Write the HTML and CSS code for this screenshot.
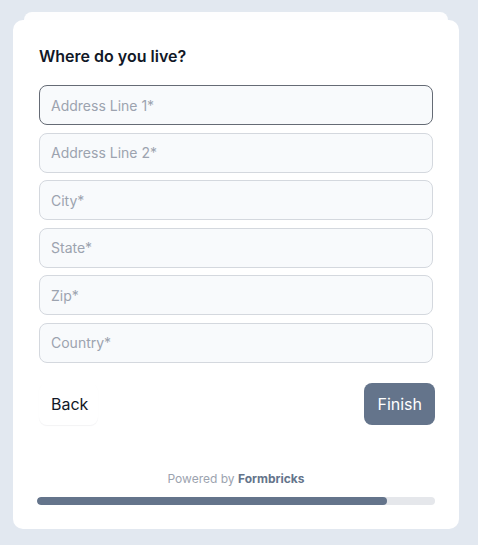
FILE: index.html
```html
<!DOCTYPE html>
<html>
<head>
<meta charset="utf-8">
<link rel="stylesheet" href="styles.css">
</head>
<body>
<div class="stack">
  <div class="back-card"></div>
  <div class="card">
    <h1 class="title">Where do you live?</h1>
    <div class="fields">
      <div class="field focused">Address Line 1*</div>
      <div class="field">Address Line 2*</div>
      <div class="field">City*</div>
      <div class="field">State*</div>
      <div class="field">Zip*</div>
      <div class="field">Country*</div>
    </div>
    <div class="actions">
      <button class="btn-back">Back</button>
      <button class="btn-finish">Finish</button>
    </div>
    <div class="powered">Powered by <b>Formbricks</b></div>
    <div class="progress"><div class="progress-fill" style="width:87.9%"></div></div>
  </div>
</div>
</body>
</html>
```
FILE: styles.css
```css
* { box-sizing: border-box; }
html, body { margin: 0; padding: 0; }
body {
  background: #e2e8f0;
  font-family: Inter, "Noto Sans", sans-serif;
  width: 478px;
  height: 545px;
  overflow: hidden;
}
.stack {
  padding: 12px 19px 0 13px;
}
.back-card {
  margin: 0 11px;
  height: 12px;
  background: #fdfdfe;
  border-radius: 8px 8px 0 0;
  border-bottom: 1px solid #e6eaf0;
}
.card {
  position: relative;
  margin-top: -4px;
  background: #ffffff;
  border-radius: 10px;
  height: 509px;
  padding: 24px 24px 24px 24px;
  display: flex;
  flex-direction: column;
}
.title {
  margin: 0 2px;
  font-size: 16px;
  line-height: 24px;
  font-weight: 600;
  color: #111827;
}
.fields {
  margin: 17px 2px 0;
  display: flex;
  flex-direction: column;
  gap: 7.6px;
}
.field {
  height: 40px;
  border: 1px solid #d4d8de;
  border-radius: 8px;
  background: #f8fafc;
  padding: 0 11px;
  display: flex;
  align-items: center;
  font-size: 14px;
  color: #9ca3af;
}
.field.focused {
  border-color: #656b75;
}
.actions {
  margin-top: 20px;
  display: flex;
  justify-content: space-between;
  align-items: center;
}
.btn-back, .btn-finish {
  font-family: inherit;
  font-size: 16px;
  font-weight: 400;
  border: none;
  height: 42px;
  border-radius: 8px;
  padding: 0 12px;
}
.btn-back {
  margin-left: 2px;
  padding: 0 10px 0 12px;
  background: #fff;
  color: #111827;
  box-shadow: 0 1px 1px rgba(15, 23, 42, 0.05);
}
.btn-finish {
  background: #64748b;
  color: #fff;
  padding: 0 13px;
}
.powered {
  margin-top: 46px;
  text-align: center;
  font-size: 12px;
  line-height: 16px;
  color: #9ca3af;
}
.powered b {
  color: #64748b;
  font-weight: 700;
}
.progress {
  margin-top: 10px;
  height: 8px;
  background: #e5e7eb;
  border-radius: 999px;
  overflow: hidden;
}
.progress-fill {
  height: 100%;
  background: #64748b;
  border-radius: 999px;
}
```
